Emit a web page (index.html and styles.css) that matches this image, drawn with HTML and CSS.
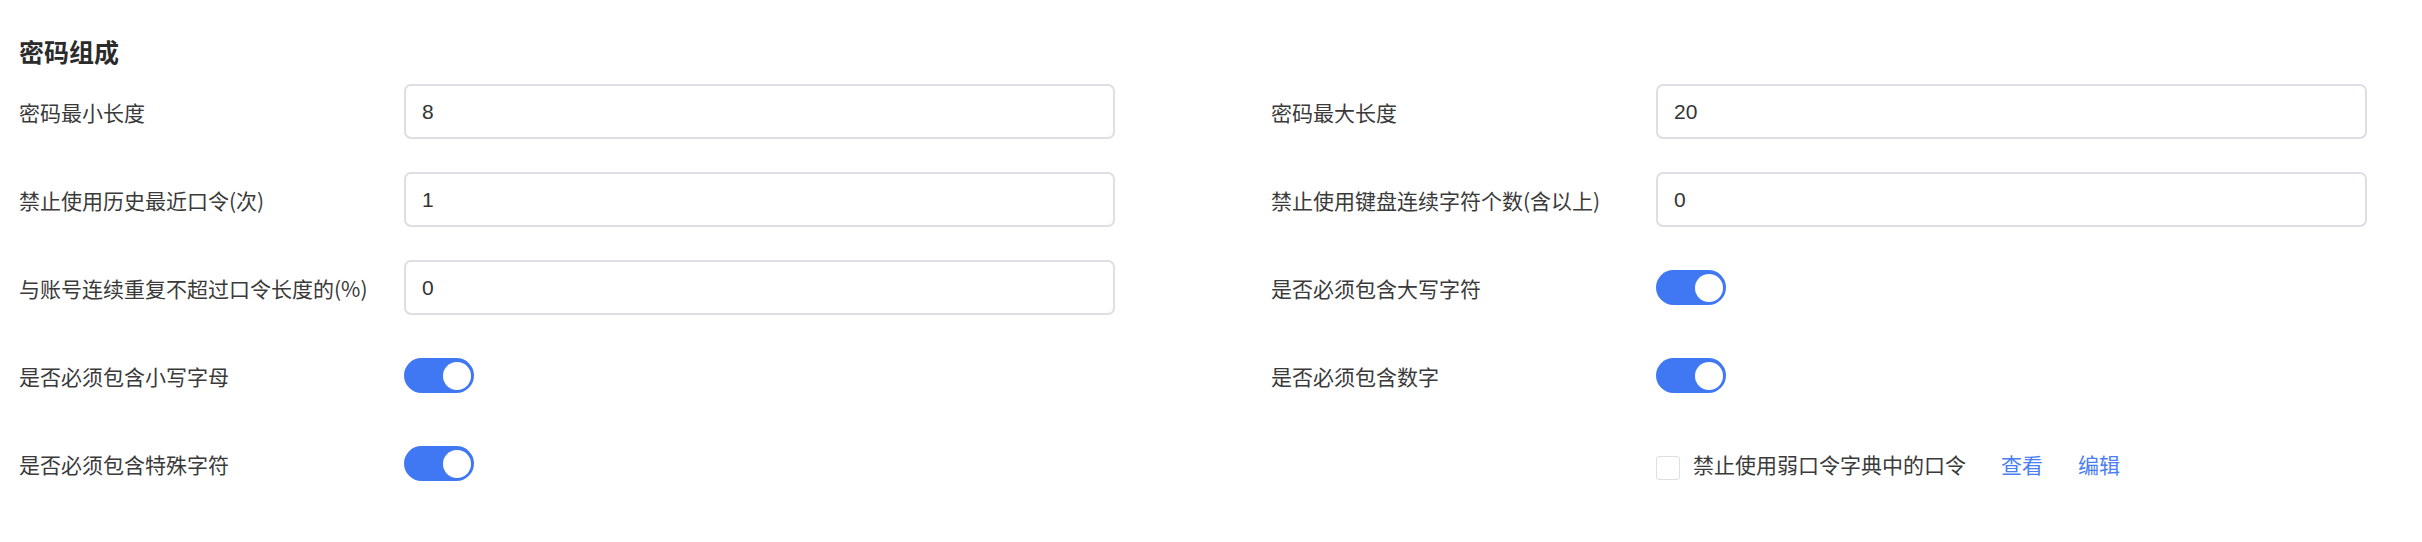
FILE: index.html
```html
<!DOCTYPE html>
<html lang="zh-CN">
<head>
  <meta charset="UTF-8">
  <title>密码组成</title>
  <link rel="stylesheet" href="styles.css">
</head>
<body>

<div class="page">
  <h2 class="section-title">密码组成</h2>

  <div class="form">
    <div class="form-item">
      <label class="item-label">密码最小长度</label>
      <input class="text-input" type="text" value="8">
    </div>
    <div class="form-item">
      <label class="item-label">密码最大长度</label>
      <input class="text-input" type="text" value="20">
    </div>

    <div class="form-item">
      <label class="item-label">禁止使用历史最近口令(次)</label>
      <input class="text-input" type="text" value="1">
    </div>
    <div class="form-item">
      <label class="item-label">禁止使用键盘连续字符个数(含以上)</label>
      <input class="text-input" type="text" value="0">
    </div>

    <div class="form-item">
      <label class="item-label">与账号连续重复不超过口令长度的(%)</label>
      <input class="text-input" type="text" value="0">
    </div>
    <div class="form-item">
      <label class="item-label">是否必须包含大写字符</label>
      <span class="switch is-on"><span class="knob"></span></span>
    </div>

    <div class="form-item">
      <label class="item-label">是否必须包含小写字母</label>
      <span class="switch is-on"><span class="knob"></span></span>
    </div>
    <div class="form-item">
      <label class="item-label">是否必须包含数字</label>
      <span class="switch is-on"><span class="knob"></span></span>
    </div>

    <div class="form-item">
      <label class="item-label">是否必须包含特殊字符</label>
      <span class="switch is-on"><span class="knob"></span></span>
    </div>
    <div class="form-item">
      <label class="item-label"></label>
      <div class="dict-row">
        <label class="checkbox"><span class="box"></span>禁止使用弱口令字典中的口令</label>
        <a class="link" href="#">查看</a>
        <a class="link" href="#">编辑</a>
      </div>
    </div>
  </div>
</div>

</body>
</html>
```

FILE: styles.css
```css
body {
  margin: 0;
  background: #fff;
  font-family: "Noto Sans CJK SC", "Liberation Sans", sans-serif;
  color: #3a3a3a;
}

.page {
  padding: 34px 54px 0 19px;
}

.section-title {
  margin: 0 0 16px;
  font-size: 25px;
  line-height: 34px;
  font-weight: bold;
  color: #2b2b2b;
}

.form {
  display: grid;
  grid-template-columns: 1096px 1096px;
  column-gap: 156px;
  row-gap: 33px;
}

.form-item {
  display: flex;
  align-items: center;
  height: 55px;
}

.item-label {
  width: 385px;
  flex-shrink: 0;
  font-size: 21px;
  color: #3a3a3a;
  white-space: nowrap;
}

.text-input {
  flex: 1;
  box-sizing: border-box;
  height: 55px;
  padding: 0 16px;
  border: 2px solid #dcdfe6;
  border-radius: 7px;
  outline: none;
  font-family: "Liberation Sans", Arial, sans-serif;
  font-size: 21px;
  color: #333;
}

.switch {
  position: relative;
  display: inline-block;
  width: 70px;
  height: 35px;
  border-radius: 18px;
  background: #dcdfe6;
}

.switch.is-on {
  background: #3f78f2;
}

.switch .knob {
  position: absolute;
  top: 3.5px;
  left: 3px;
  width: 28px;
  height: 28px;
  border-radius: 50%;
  background: #fff;
}

.switch.is-on .knob {
  left: auto;
  right: 3px;
}

.dict-row {
  display: flex;
  align-items: center;
  gap: 35px;
  font-size: 21px;
}

.checkbox {
  display: flex;
  align-items: center;
  gap: 13px;
  color: #3a3a3a;
}

.checkbox .box {
  box-sizing: border-box;
  width: 24px;
  height: 24px;
  border: 1.5px solid #dcdfe6;
  border-radius: 3px;
  background: #fff;
  margin-top: 8px;
}

.link {
  color: #4a7ef2;
  text-decoration: none;
}
```
